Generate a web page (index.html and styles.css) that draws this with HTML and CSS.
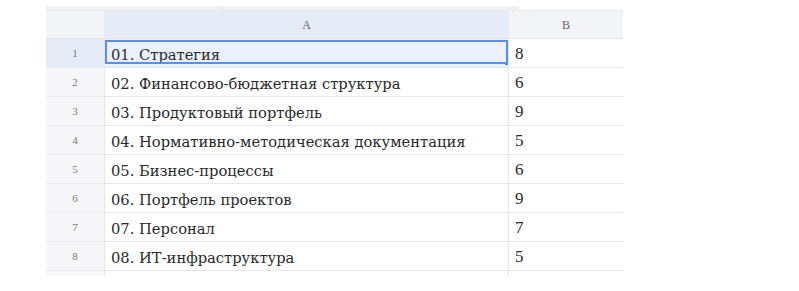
FILE: index.html
```html
<!DOCTYPE html>
<html>
<head>
<meta charset="utf-8">
<link rel="stylesheet" href="styles.css">
</head>
<body>
<div class="sheet">
  <div class="topstrip"><span class="seg1"></span><span class="seg2"></span></div>
  <div class="grid">
    <div class="corner"></div>
    <div class="colhead active">A</div>
    <div class="colhead">B</div>

    <div class="rownum active">1</div>
    <div class="cell a sel"><span>01. Стратегия</span></div>
    <div class="cell b">8</div>

    <div class="rownum">2</div>
    <div class="cell a">02. Финансово-бюджетная структура</div>
    <div class="cell b">6</div>

    <div class="rownum">3</div>
    <div class="cell a">03. Продуктовый портфель</div>
    <div class="cell b">9</div>

    <div class="rownum">4</div>
    <div class="cell a">04. Нормативно-методическая документация</div>
    <div class="cell b">5</div>

    <div class="rownum">5</div>
    <div class="cell a">05. Бизнес-процессы</div>
    <div class="cell b">6</div>

    <div class="rownum">6</div>
    <div class="cell a">06. Портфель проектов</div>
    <div class="cell b">9</div>

    <div class="rownum">7</div>
    <div class="cell a">07. Персонал</div>
    <div class="cell b">7</div>

    <div class="rownum">8</div>
    <div class="cell a">08. ИТ-инфраструктура</div>
    <div class="cell b">5</div>

    <div class="rownum tail"></div>
    <div class="cell tail"></div>
    <div class="cell tail"></div>
  </div>
</div>
</body>
</html>
```
FILE: styles.css
```css
html, body {
  margin: 0;
  padding: 0;
  background: #ffffff;
}
.sheet {
  padding: 6px 0 0 46px;
  font-family: "DejaVu Serif", serif;
}
.topstrip {
  display: flex;
  width: 473px;
  height: 4px;
}
.seg1 {
  width: 175px;
  background: #f1f1f1;
  border-right: 1px solid #e2e2e2;
}
.seg2 {
  flex: 1;
  background: #f1f1f1;
}
.grid {
  display: grid;
  grid-template-columns: 58px 404px 115px;
  grid-template-rows: 29px repeat(8, 29px) 5px;
  width: 577px;
}
.corner {
  background: #f3f4f7;
  border-top: 1px solid #ebebeb;
  border-bottom: 1px solid #e4e4e4;
}
.colhead {
  background: #f3f4f7;
  border-top: 1px solid #ebebeb;
  border-bottom: 1px solid #e4e4e4;
  border-left: 1px solid #ebebeb;
  color: #666;
  font-family: "Liberation Serif", serif;
  font-size: 12px;
  display: flex;
  align-items: center;
  justify-content: center;
  padding-top: 1px;
}
.colhead.active {
  background: #e6ecf7;
}
.rownum {
  background: #f7f7f9;
  border-bottom: 1px solid #ececec;
  color: #777;
  font-family: "Liberation Serif", serif;
  font-size: 11px;
  display: flex;
  align-items: center;
  justify-content: center;
}
.rownum.active {
  background: #e6ecf7;
}
.cell {
  border-bottom: 1px solid #e6e6e6;
  border-left: 1px solid #e6e6e6;
  color: #2a2a2a;
  font-family: "DejaVu Serif", serif;
  font-size: 14.7px;
  display: flex;
  align-items: center;
  padding-left: 6px;
  padding-top: 2px;
  white-space: nowrap;
}
.cell.b {
  font-family: "Liberation Serif", serif;
  font-size: 17px;
}
.cell.sel {
  position: relative;
  background: #eaf1fd;
}
.cell.sel::after {
  content: "";
  position: absolute;
  left: 0;
  top: 1px;
  right: 0;
  bottom: 3px;
  border: 2px solid #5a8ff0;
  pointer-events: none;
}
.cell.sel::before {
  content: "";
  position: absolute;
  right: 0;
  bottom: 2px;
  width: 3px;
  height: 3px;
  background: #4a84ee;
}
.tail {
  border-bottom: none;
}
.rownum.tail {
  background: #f7f7f9;
}
```
